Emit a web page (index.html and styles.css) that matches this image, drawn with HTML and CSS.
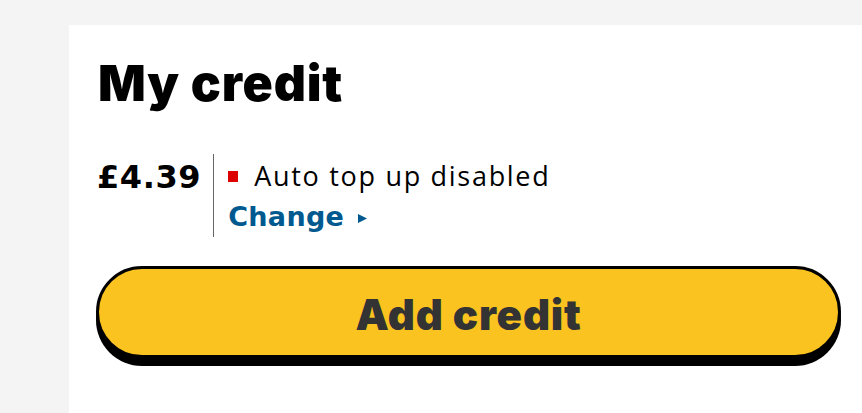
FILE: index.html
```html
<!DOCTYPE html>
<html lang="en">
<head>
<meta charset="utf-8">
<title>My credit</title>
<link rel="stylesheet" href="styles.css">
</head>
<body>
<main class="card">
  <h1 class="title">My credit</h1>
  <div class="balance">
    <div class="amount">£4.39</div>
    <div class="divider"></div>
    <div class="topup">
      <div class="status"><span class="dot"></span><span>Auto top up disabled</span></div>
      <a class="change" href="#">Change <svg class="arrow" width="9" height="9" viewBox="0 0 9 9"><path d="M0 0 L9 4.5 L0 9 Z" fill="#005a8f"/></svg></a>
    </div>
  </div>
  <button class="add">Add credit</button>
</main>
</body>
</html>
```
FILE: styles.css
```css
html, body {
  margin: 0;
  padding: 0;
  background: #f4f4f4;
  height: 100%;
  overflow: hidden;
}
.card {
  margin: 25px 0 0 69px;
  background: #fff;
  min-height: 388px;
  box-sizing: border-box;
  padding: 26px 20px 0 28px;
  font-family: "Open Sans", sans-serif;
  color: #000;
}
.title {
  font-family: Inter, sans-serif;
  font-weight: 900;
  font-size: 50px;
  letter-spacing: 0.8px;
  line-height: 64px;
  margin: 0 0 0 1px;
}
.balance {
  display: flex;
  align-items: flex-start;
  margin-top: 39px;
}
.amount {
  font-family: "DejaVu Sans", sans-serif;
  font-weight: bold;
  font-size: 32px;
  letter-spacing: 0.6px;
  line-height: 44px;
  margin-top: 1px;
}
.divider {
  width: 1px;
  height: 83px;
  background: #666;
  margin: 0 13px 0 12px;
}
.topup {
  display: flex;
  flex-direction: column;
  margin-top: 4px;
}
.status {
  display: flex;
  align-items: center;
  font-size: 27px;
  letter-spacing: 1.7px;
  line-height: 36px;
}
.dot {
  width: 10px;
  height: 11px;
  background: #dd0000;
  margin: 0 16px 0 1px;
}
.change {
  display: flex;
  align-items: center;
  gap: 14px;
  font-family: "DejaVu Sans", sans-serif;
  font-weight: bold;
  font-size: 27px;
  letter-spacing: 0.3px;
  line-height: 46px;
  color: #005a8f;
  text-decoration: none;
  margin-left: 1px;
}
.arrow {
  display: block;
  margin-top: 2px;
}
.add {
  display: block;
  width: 745px;
  height: 92px;
  margin-top: 26px;
  margin-left: -1px;
  box-sizing: border-box;
  background: #fbc31f;
  border: 3px solid #000;
  border-radius: 46px;
  box-shadow: 0 8px 0 #000;
  font-family: Inter, sans-serif;
  font-weight: 900;
  font-size: 42px;
  letter-spacing: 0.8px;
  color: #333;
  padding: 4px 0 0;
}
```
